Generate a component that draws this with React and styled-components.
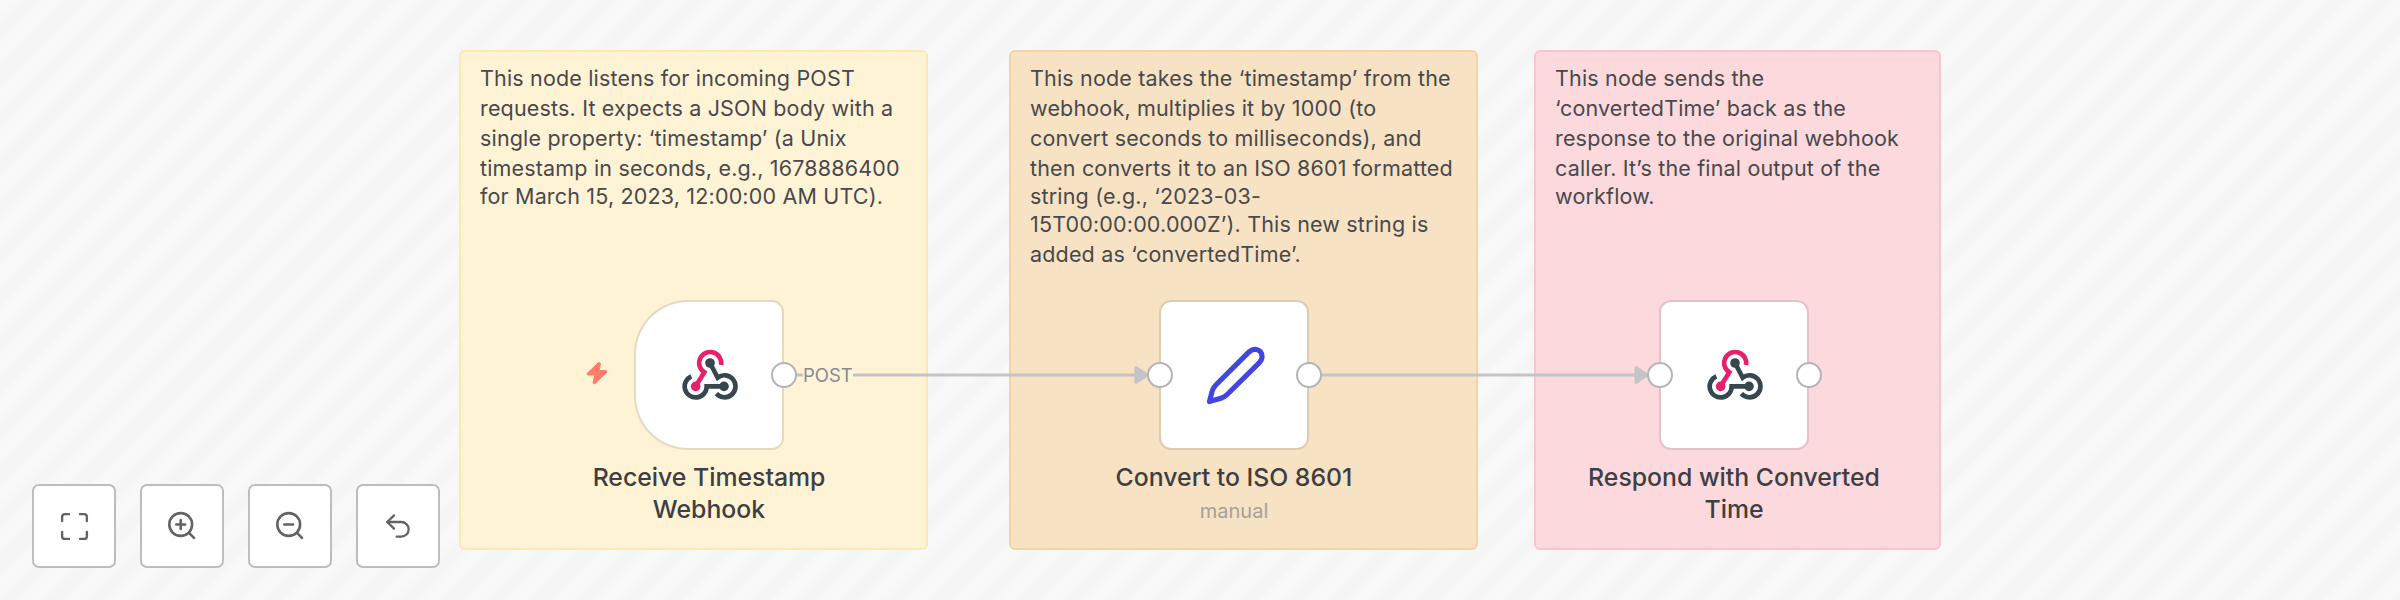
import React from "react";
import styled, { createGlobalStyle, css } from "styled-components";
import { Maximize, Undo2 } from "lucide-react";

const GlobalStyle = createGlobalStyle`
  body {
    margin: 0;
    font-family: Inter, "Open Sans", sans-serif;
  }
`;

const Canvas = styled.main`
  position: relative;
  width: 2400px;
  height: 600px;
  overflow: hidden;
  background: repeating-linear-gradient(
    135deg,
    #f8f8f8 0,
    #f9f9f9 7px,
    #f8f8f8 13px,
    #f5f5f5 19px,
    #f5f5f5 27px,
    #f8f8f8 31.36px
  );
`;

const noteColors = {
  yellow: { background: "#fff3d6", border: "#fde8b3" },
  orange: { background: "#f7e2c3", border: "#f4d4a3" },
  pink: { background: "#fbd9dd", border: "#f9c5cf" }
};

const Note = styled.section`
  position: absolute;
  top: 50px;
  left: ${props => props.$x}px;
  width: ${props => props.$width}px;
  height: 500px;
  box-sizing: border-box;
  padding: 11px 19px;
  border: 2px solid ${props => noteColors[props.$color].border};
  border-radius: 6px;
  background-color: ${props => noteColors[props.$color].background};
`;

const NoteText = styled.p`
  display: grid;
  grid-template-rows: 30px 30px 30px 28px 28px 30px 30px;
  margin: 0;
  color: #48494c;
  font-size: 21.5px;
  letter-spacing: 0.17px;
  line-height: 30px;
  white-space: nowrap;
`;

const Edges = styled.svg`
  position: absolute;
  top: 0;
  left: 0;
`;

const EdgeLabel = styled.span`
  position: absolute;
  top: 364px;
  left: 803px;
  color: #888a94;
  background-color: #fff3d6;
  font-size: 18.5px;
  line-height: 22px;
`;

const NodeWrapper = styled.div`
  position: absolute;
  top: 300px;
  left: ${props => props.$x}px;
  width: 150px;
  display: flex;
  flex-direction: column;
  align-items: center;
`;

const NodeBox = styled.div`
  position: relative;
  display: flex;
  align-items: center;
  justify-content: center;
  width: 150px;
  height: 150px;
  box-sizing: border-box;
  padding-left: 2px;
  border: 2px solid rgba(120, 120, 120, 0.2);
  border-radius: ${props => (props.$trigger ? "54px 12px 12px 54px" : "12px")};
  background-color: #fff;
  background-clip: padding-box;
`;

const Handle = styled.i`
  position: absolute;
  top: 60px;
  width: 26px;
  height: 26px;
  box-sizing: border-box;
  border: 2px solid #b4b4b6;
  border-radius: 50%;
  background-color: #fff;
  ${props =>
    props.$side === "left"
      ? css`
          left: -14px;
        `
      : css`
          right: -15px;
        `}
`;

const NodeTitle = styled.h2`
  width: 310px;
  margin: 11px 0 0;
  color: #3e3f42;
  font-size: 24.8px;
  font-weight: 500;
  line-height: 32px;
  text-align: center;
`;

const NodeSubtitle = styled.span`
  margin-top: 6px;
  color: #a5a19d;
  font-size: 20px;
  line-height: 24px;
`;

const Bolt = styled.svg`
  position: absolute;
  top: 61px;
  left: -49px;
`;

const Toolbar = styled.nav`
  position: absolute;
  left: 32px;
  bottom: 32px;
  display: flex;
  gap: 24px;
`;

const ToolButton = styled.button`
  display: flex;
  align-items: center;
  justify-content: center;
  width: 84px;
  height: 84px;
  box-sizing: border-box;
  padding: 0;
  border: 2px solid #bdbdbd;
  border-radius: 7px;
  color: #636363;
  background-color: #fff;
`;

const WebhookIcon = () => (
  <svg width="56" height="52" viewBox="37 56 168 156" fill="none">
    <g strokeWidth="14">
      <path d="M65 138A33 33 0 1 0 111 168H160" stroke="#37474f" />
      <path d="M121 98L144 142A33 33 0 1 1 140 190" stroke="#37474f" />
      <path d="M154 104A33 33 0 1 0 104 126L78 168" stroke="#e6206a" />
    </g>
    <circle cx="121" cy="98" r="14.5" fill="#37474f" />
    <circle cx="163" cy="168" r="14.5" fill="#37474f" />
    <circle cx="78" cy="168" r="14.5" fill="#e6206a" />
  </svg>
);

const PencilIcon = () => (
  <svg width="61" height="61" viewBox="0 0 62 62" fill="none">
    <path
      d="M4.5 57.5L7.4 46.5Q8.5 43 11 40.7L44 7.7Q47.5 4.3 51 4.3Q57.8 5 58 12Q57.8 15.5 54.5 18.7L22.5 50.3Q20 52.7 17 53.8Z"
      stroke="#4245e0"
      strokeWidth="5.2"
      strokeLinejoin="round"
    />
  </svg>
);

const ZoomIcon = ({ plus }) => (
  <svg
    width="32"
    height="32"
    viewBox="0 0 32 32"
    fill="none"
    stroke="currentColor"
    strokeWidth="2.6"
    strokeLinecap="round"
  >
    <circle cx="14.7" cy="14.5" r="11.4" />
    <path d="M23 22.8l5 5M10.3 14.5h8.8" />
    {plus && <path d="M14.7 10.1v8.8" />}
  </svg>
);

const notes = [
  {
    x: 459,
    width: 469,
    color: "yellow",
    lines: [
      "This node listens for incoming POST",
      "requests. It expects a JSON body with a",
      "single property: ‘timestamp’ (a Unix",
      "timestamp in seconds, e.g., 1678886400",
      "for March 15, 2023, 12:00:00 AM UTC)."
    ]
  },
  {
    x: 1009,
    width: 469,
    color: "orange",
    lines: [
      "This node takes the ‘timestamp’ from the",
      "webhook, multiplies it by 1000 (to",
      "convert seconds to milliseconds), and",
      "then converts it to an ISO 8601 formatted",
      "string (e.g., ‘2023-03-",
      "15T00:00:00.000Z’). This new string is",
      "added as ‘convertedTime’."
    ]
  },
  {
    x: 1534,
    width: 407,
    color: "pink",
    lines: [
      "This node sends the",
      "‘convertedTime’ back as the",
      "response to the original webhook",
      "caller. It’s the final output of the",
      "workflow."
    ]
  }
];

const nodes = [
  {
    x: 634,
    trigger: true,
    handles: ["right"],
    icon: <WebhookIcon />,
    title: "Receive Timestamp Webhook"
  },
  {
    x: 1159,
    handles: ["left", "right"],
    icon: <PencilIcon />,
    title: "Convert to ISO 8601",
    subtitle: "manual"
  },
  {
    x: 1659,
    handles: ["left", "right"],
    icon: <WebhookIcon />,
    title: "Respond with Converted Time"
  }
];

const App = () => (
  <Canvas>
    <GlobalStyle />

    {notes.map(note => (
      <Note key={note.x} $x={note.x} $width={note.width} $color={note.color}>
        <NoteText>
          {note.lines.map(line => (
            <span key={line}>{line}</span>
          ))}
        </NoteText>
      </Note>
    ))}

    <Edges width="2400" height="600" fill="#c3c4c5" stroke="#c3c4c5">
      <path d="M790 375H1136M1315 375H1636" strokeWidth="3" />
      <path
        d="M1136 367.5L1147 375L1136 382.5ZM1636 367.5L1647 375L1636 382.5Z"
        strokeWidth="3"
        strokeLinejoin="round"
      />
    </Edges>
    <EdgeLabel>POST</EdgeLabel>

    {nodes.map(node => (
      <NodeWrapper key={node.x} $x={node.x}>
        {node.trigger && (
          <Bolt width="24" height="24" viewBox="0 0 24 24" fill="#ff7c69">
            <path
              d="M13.5 1.5L2 12.5L2.6 14H9.7L8 22L9.7 22.8L22 11L21.3 9.6H14.2L15.4 2.2Z"
              stroke="#ff7c69"
              strokeLinejoin="round"
            />
          </Bolt>
        )}
        <NodeBox $trigger={node.trigger}>
          {node.icon}
          {node.handles.map(side => (
            <Handle key={side} $side={side} />
          ))}
        </NodeBox>
        <NodeTitle>{node.title}</NodeTitle>
        {node.subtitle && <NodeSubtitle>{node.subtitle}</NodeSubtitle>}
      </NodeWrapper>
    ))}

    <Toolbar>
      <ToolButton aria-label="Fit view">
        <Maximize size={33} strokeWidth={1.7} />
      </ToolButton>
      <ToolButton aria-label="Zoom in">
        <ZoomIcon plus />
      </ToolButton>
      <ToolButton aria-label="Zoom out">
        <ZoomIcon />
      </ToolButton>
      <ToolButton aria-label="Reset zoom">
        <Undo2 size={32} strokeWidth={1.7} />
      </ToolButton>
    </Toolbar>
  </Canvas>
);

export default App;
